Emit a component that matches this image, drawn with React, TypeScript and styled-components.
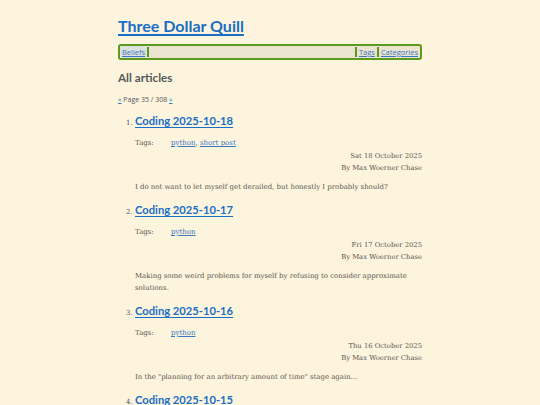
import React from "react";
import styled, { createGlobalStyle } from "styled-components";

const Global = createGlobalStyle`
  html, body { margin: 0; padding: 0; background: #fcf4dc; }
  body { font-family: "DejaVu Serif", serif; color: #5a5650; }
`;

const Page = styled.div`
  width: 304px;
  margin: 0 auto;
  padding-top: 14px;
`;

const Title = styled.h1`
  margin: 0;
  font-family: Lato, "Open Sans", sans-serif;
  font-weight: 700;
  font-size: 16px;
  line-height: 24px;
  a { color: #1a6ec6; text-decoration: underline; text-decoration-thickness: 1.5px; text-underline-offset: 2px; }
`;

const Nav = styled.nav`
  margin-top: 6px;
  display: flex;
  align-items: stretch;
  height: 12px;
  border: 2px solid #5c9a1e;
  border-radius: 3px;
  background: #ebe4d1;
  font-family: "Open Sans", "Noto Sans", sans-serif;
  font-size: 7.5px;
  line-height: 12px;
`;

const NavLink = styled.a<{ $hl?: boolean }>`
  color: #3a78c0;
  text-decoration: underline;
  padding: 0 2px;
  background: ${(p) => (p.$hl ? "#dfe2dc" : "transparent")};
`;

const Sep = styled.span`
  width: 2px;
  background: #5c9a1e;
  margin: 1px 0;
`;

const Spacer = styled.span`
  flex: 1;
`;

const Heading = styled.h2`
  margin: 9px 0 0;
  font-family: Lato, "Open Sans", sans-serif;
  font-weight: 700;
  font-size: 11.7px;
  line-height: 16px;
  color: #55595c;
`;

const Pager = styled.div`
  margin-top: 9px;
  font-family: "Open Sans", "Noto Sans", sans-serif;
  font-size: 7px;
  line-height: 12px;
  color: #55595c;
  a { color: #3a78c0; }
`;

const List = styled.ol`
  margin: 3px 0 0;
  padding-left: 17px;
  font-size: 7px;
  li::marker { font-size: 7px; color: #55595c; }
`;

const Item = styled.li`
  margin-bottom: 5px;
`;

const ItemTitle = styled.h3`
  margin: 0;
  display: inline;
  font-family: Lato, "Open Sans", sans-serif;
  font-weight: 700;
  font-size: 11.2px;
  line-height: 24px;
  a { color: #1a6ec6; text-decoration: underline; text-decoration-thickness: 1.2px; text-underline-offset: 2px; }
`;

const Tags = styled.div`
  margin-top: 4px;
  display: flex;
  font-size: 7px;
  line-height: 12px;
  a { color: #3a78c0; }
`;

const TagLabel = styled.span`
  width: 36px;
`;

const Meta = styled.div`
  text-align: right;
  font-size: 6.8px;
  line-height: 12px;
  margin-top: 1px;
`;

const Summary = styled.p`
  margin: 7px 0 0;
  font-size: 6.95px;
  line-height: 12px;
`;

const items = [
  { t: "Coding 2025-10-18", tags: ["python", "short post"], d: "Sat 18 October 2025", s: "I do not want to let myself get derailed, but honestly I probably should?" },
  { t: "Coding 2025-10-17", tags: ["python"], d: "Fri 17 October 2025", s: "Making some weird problems for myself by refusing to consider approximate solutions." },
  { t: "Coding 2025-10-16", tags: ["python"], d: "Thu 16 October 2025", s: "In the \"planning for an arbitrary amount of time\" stage again\u2026" },
  { t: "Coding 2025-10-15", tags: ["python"], d: "Wed 15 October 2025", s: "More work." },
];

export default function App() {
  return (
    <>
      <Global />
      <Page>
        <Title><a href="#">Three Dollar Quill</a></Title>
        <Nav>
          <NavLink href="#" $hl>Beliefs</NavLink>
          <Sep />
          <Spacer />
          <Sep />
          <NavLink href="#">Tags</NavLink>
          <Sep />
          <NavLink href="#">Categories</NavLink>
        </Nav>
        <Heading>All articles</Heading>
        <Pager><a href="#">«</a> Page 35 / 308 <a href="#">»</a></Pager>
        <List>
          {items.map((it) => (
            <Item key={it.t}>
              <ItemTitle><a href="#">{it.t}</a></ItemTitle>
              <Tags>
                <TagLabel>Tags:</TagLabel>
                <span>
                  {it.tags.map((tg, i) => (
                    <React.Fragment key={tg}>
                      {i > 0 && ", "}
                      <a href="#">{tg}</a>
                    </React.Fragment>
                  ))}
                </span>
              </Tags>
              <Meta>{it.d}<br />By Max Woerner Chase</Meta>
              <Summary>{it.s}</Summary>
            </Item>
          ))}
        </List>
      </Page>
    </>
  );
}
